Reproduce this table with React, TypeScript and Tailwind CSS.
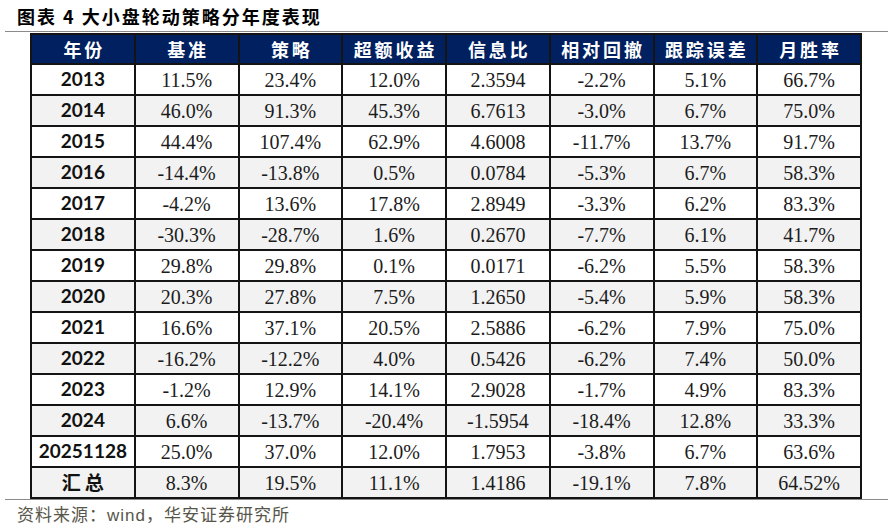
const HEAD = ["年份", "基准", "策略", "超额收益", "信息比", "相对回撤", "跟踪误差", "月胜率"];

const ROWS: string[][] = [
  ["2013", "11.5%", "23.4%", "12.0%", "2.3594", "-2.2%", "5.1%", "66.7%"],
  ["2014", "46.0%", "91.3%", "45.3%", "6.7613", "-3.0%", "6.7%", "75.0%"],
  ["2015", "44.4%", "107.4%", "62.9%", "4.6008", "-11.7%", "13.7%", "91.7%"],
  ["2016", "-14.4%", "-13.8%", "0.5%", "0.0784", "-5.3%", "6.7%", "58.3%"],
  ["2017", "-4.2%", "13.6%", "17.8%", "2.8949", "-3.3%", "6.2%", "83.3%"],
  ["2018", "-30.3%", "-28.7%", "1.6%", "0.2670", "-7.7%", "6.1%", "41.7%"],
  ["2019", "29.8%", "29.8%", "0.1%", "0.0171", "-6.2%", "5.5%", "58.3%"],
  ["2020", "20.3%", "27.8%", "7.5%", "1.2650", "-5.4%", "5.9%", "58.3%"],
  ["2021", "16.6%", "37.1%", "20.5%", "2.5886", "-6.2%", "7.9%", "75.0%"],
  ["2022", "-16.2%", "-12.2%", "4.0%", "0.5426", "-6.2%", "7.4%", "50.0%"],
  ["2023", "-1.2%", "12.9%", "14.1%", "2.9028", "-1.7%", "4.9%", "83.3%"],
  ["2024", "6.6%", "-13.7%", "-20.4%", "-1.5954", "-18.4%", "12.8%", "33.3%"],
  ["20251128", "25.0%", "37.0%", "12.0%", "1.7953", "-3.8%", "6.7%", "63.6%"],
  ["汇总", "8.3%", "19.5%", "11.1%", "1.4186", "-19.1%", "7.8%", "64.52%"],
];

export default function App() {
  return (
    <div className="relative h-[531px] w-[895px] overflow-hidden bg-white font-['Noto_Sans_CJK_SC',sans-serif]">
      <div className="h-[31px] pl-[17px] pt-[3px] text-[18px] font-bold leading-[26px] tracking-[2px] text-black">
        图表 4 大小盘轮动策略分年度表现
      </div>
      <div className="ml-[5px] w-[883px] border-y border-[#8a8a8a] pl-[25px] pt-px">
        <div className="grid w-[832px] grid-cols-8 gap-[2px] bg-[#141414] p-[2px]">
          {HEAD.map((h) => (
            <div
              key={h}
              className="flex h-[28px] items-center justify-center bg-[#002060] pl-[3px] text-[18px] font-semibold tracking-[3px] text-white"
            >
              {h}
            </div>
          ))}
          {ROWS.map((row, i) =>
            row.map((cell, j) => {
              const bg = i % 2 === 1 ? "bg-[#f2f2f2]" : "bg-white";
              if (j === 0) {
                const isCjk = cell === "汇总";
                return (
                  <div
                    key={`${i}-${j}`}
                    className={`flex h-[29px] items-center justify-center ${bg} text-[19px] font-bold text-[#111] ${
                      isCjk ? "pl-[4px] tracking-[4px]" : "font-['Lato',sans-serif]"
                    }`}
                  >
                    {cell}
                  </div>
                );
              }
              return (
                <div
                  key={`${i}-${j}`}
                  className={`flex h-[29px] items-center justify-center ${bg} font-['Liberation_Serif',serif] text-[20px] text-[#1c1c1c]`}
                >
                  {cell}
                </div>
              );
            }),
          )}
        </div>
      </div>
      <div className="pl-[17px] pt-[2px] text-[17px] leading-[24px] tracking-[1px] text-[#57564a]">
        资料来源：<span className="font-['Liberation_Sans',sans-serif]">wind</span>，华安证券研究所
      </div>
    </div>
  );
}
